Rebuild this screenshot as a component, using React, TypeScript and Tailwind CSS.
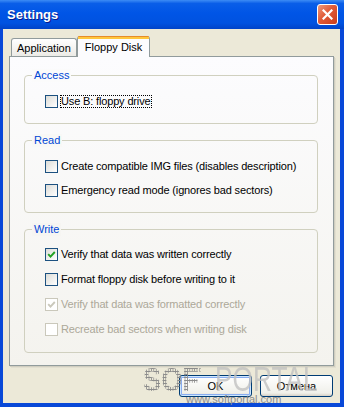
import clsx from 'clsx'

type Option = {
  label: string
  checked?: boolean
  disabled?: boolean
  focused?: boolean
}

const groups: { title: string; legendBg: string; gap: string; pt: string; pb: string; options: Option[] }[] = [
  {
    title: 'Access',
    legendBg: 'bg-[#fbfbfb]',
    gap: 'gap-[11px]',
    pt: 'pt-[19px]',
    pb: 'pb-[15px]',
    options: [{ label: 'Use B: floppy drive', focused: true }],
  },
  {
    title: 'Read',
    legendBg: 'bg-[#f8f8f6]',
    gap: 'gap-[11px]',
    pt: 'pt-[19px]',
    pb: 'pb-[15px]',
    options: [
      { label: 'Create compatible IMG files (disables description)' },
      { label: 'Emergency read mode (ignores bad sectors)' },
    ],
  },
  {
    title: 'Write',
    legendBg: 'bg-[#f6f5f2]',
    gap: 'gap-[12px]',
    pt: 'pt-[18px]',
    pb: 'pb-[16px]',
    options: [
      { label: 'Verify that data was written correctly', checked: true },
      { label: 'Format floppy disk before writing to it' },
      { label: 'Verify that data was formatted correctly', checked: true, disabled: true },
      { label: 'Recreate bad sectors when writing disk', disabled: true },
    ],
  },
]

function CheckBox({ checked, disabled }: { checked?: boolean; disabled?: boolean }) {
  return (
    <span
      className={clsx(
        'flex h-[13px] w-[13px] shrink-0 items-center justify-center border',
        disabled
          ? 'border-[#cac8bb] bg-white'
          : 'border-[#1c5180] bg-[linear-gradient(135deg,#dcdcd7,#ffffff)]'
      )}
    >
      {checked && (
        <svg width="9" height="9" viewBox="0 0 9 9" aria-hidden="true">
          <path
            d="M1.2 4.2l2.3 2.4L7.8 2"
            fill="none"
            stroke={disabled ? '#cac8bb' : '#21a121'}
            strokeWidth="1.9"
          />
        </svg>
      )}
    </span>
  )
}

export default function App() {
  return (
    <div className="relative h-[407px] w-[344px] overflow-hidden font-['Liberation_Sans',Arial,sans-serif] text-[11px] text-black">
      <div className="flex h-full flex-col bg-[#0848d8]">
        {/* Title bar */}
        <div className="flex h-[29px] shrink-0 items-center justify-between bg-[linear-gradient(to_bottom,#3d8cf5_0%,#0a5ee8_12%,#0055e6_45%,#0052e0_80%,#0043c8_100%)] pl-[7px] pr-[6px]">
          <span className="text-[13px] font-bold text-white [text-shadow:1px_1px_0_#0a1a8a]">
            Settings
          </span>
          <span className="flex h-[21px] w-[21px] items-center justify-center rounded-[3px] border border-white bg-[linear-gradient(135deg,#f09a7c_0%,#e05a38_45%,#c83c1c_100%)]">
            <svg width="11" height="11" viewBox="0 0 11 11" aria-hidden="true">
              <path d="M1.5 1.5l8 8M9.5 1.5l-8 8" stroke="white" strokeWidth="2.2" strokeLinecap="square" />
            </svg>
          </span>
        </div>

        {/* Client area */}
        <div className="flex flex-1 flex-col pb-[4px] pl-[3px] pr-[4px]">
          <div className="flex flex-1 flex-col bg-[#ece9d8] pl-[6px] pt-[7px]">
            {/* Tabs */}
            <div className="ml-[2px] flex h-[20px] items-end">
              <div className="flex h-[18px] items-center rounded-t-[3px] border border-b-0 border-[#919b9c] bg-[linear-gradient(to_bottom,#ffffff,#ecebe6)] px-[5px] pt-[1px]">
                Application
              </div>
              <div className="relative z-10 -mb-[1px] flex h-[21px] flex-col rounded-t-[3px] border-x border-[#919b9c] bg-[#fcfcfe]">
                <div className="h-[1px] rounded-t-[3px] bg-[#e68b2c]" />
                <div className="h-[2px] bg-[#ffc73c]" />
                <div className="flex flex-1 items-center px-[7px] pb-[2px]">Floppy Disk</div>
              </div>
            </div>

            {/* Tab panel */}
            <div className="flex h-[310px] w-[325px] flex-col gap-[16px] border border-[#919b9c] bg-[linear-gradient(to_bottom,#fcfcfe,#f4f3ee)] pl-[14px] pr-[15px] pt-[18px] shadow-[1px_1px_0_#d0cec0,2px_2px_0_#e2dfd0]">
              {groups.map((group) => (
                <div
                  key={group.title}
                  className={clsx(
                    'relative flex flex-col rounded-[4px] border border-[#d0d0bf] pl-[20px]',
                    group.gap,
                    group.pt,
                    group.pb
                  )}
                >
                  <span
                    className={clsx(
                      'absolute -top-[7px] left-[7px] px-[2px] leading-[13px] text-[#0046d5]',
                      group.legendBg
                    )}
                  >
                    {group.title}
                  </span>
                  {group.options.map((option) => (
                    <div key={option.label} className="flex h-[13px] items-center">
                      <CheckBox checked={option.checked} disabled={option.disabled} />
                      <span
                        className={clsx(
                          'whitespace-nowrap leading-[11px] tracking-[-0.15px]',
                          option.disabled && 'text-[#aca899]',
                          option.focused
                            ? 'ml-[2px] flex h-[13px] items-center border border-dotted border-black pr-[1px]'
                            : 'ml-[3px]'
                        )}
                      >
                        {option.label}
                      </span>
                    </div>
                  ))}
                </div>
              ))}
            </div>

            {/* Buttons */}
            <div className="mt-[9px] flex justify-end gap-[8px] pr-[7px]">
              <button className="flex h-[22px] w-[73px] items-center justify-center rounded-[3px] border border-[#003c74] bg-[linear-gradient(to_bottom,#ffffff,#f0f0ea_85%,#d6d0c5)] shadow-[inset_0_0_0_1px_#cee7ff,inset_0_0_0_2px_#89adf0]">
                OK
              </button>
              <button className="flex h-[22px] w-[73px] items-center justify-center rounded-[3px] border border-[#003c74] bg-[linear-gradient(to_bottom,#ffffff,#f0f0ea_85%,#d6d0c5)]">
                Отмена
              </button>
            </div>
          </div>
        </div>
      </div>

      {/* Watermark overlay */}
      <div className="pointer-events-none absolute left-[143px] top-[361px] flex items-start">
        <span className="w-[72px] origin-left scale-x-[0.8] bg-[radial-gradient(circle,#8c8c8c_1px,transparent_1.2px)] bg-[length:3px_3px] bg-clip-text text-[34px] font-bold leading-[36px] text-transparent">
          SOFT
        </span>
        <span className="w-[105px] origin-left scale-x-[0.75] text-[35px] leading-[36px] text-[#c0c0c0]/80">
          PORTAL
        </span>
      </div>
      <div className="pointer-events-none absolute left-[186px] top-[395px] text-[11px] leading-[9px] text-[#8c8c8c]">
        www.softportal.com
      </div>
    </div>
  )
}
